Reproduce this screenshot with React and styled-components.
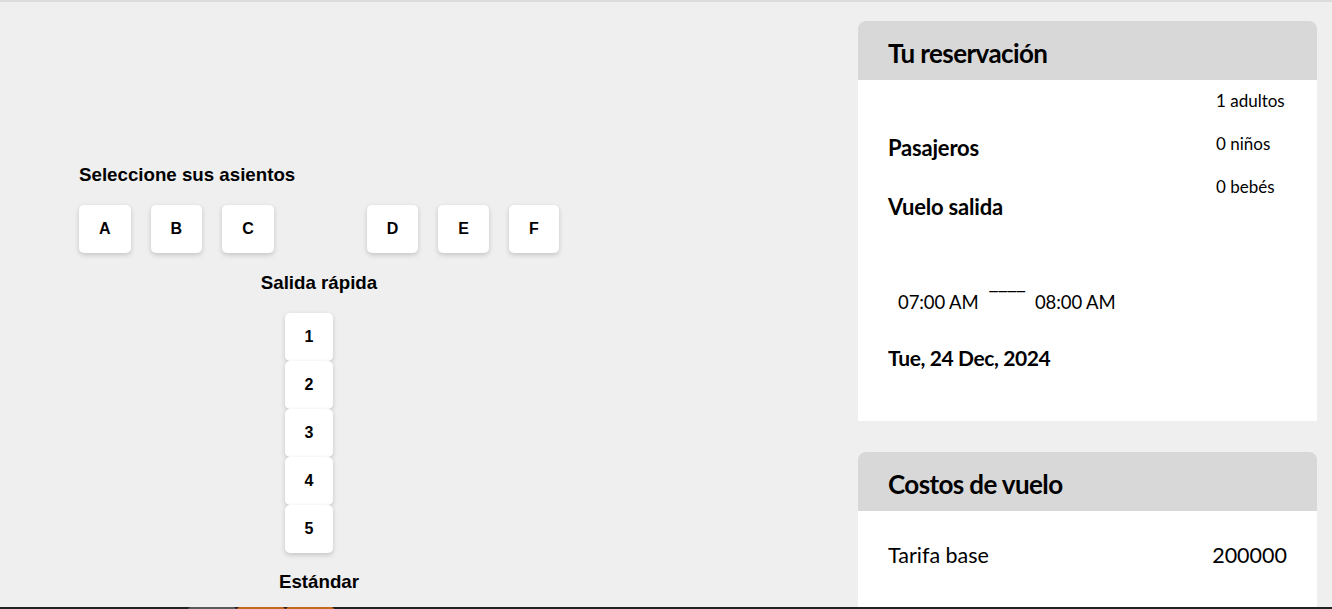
import React from "react";
import styled, { createGlobalStyle } from "styled-components";

const Global = createGlobalStyle`
  html, body { margin: 0; padding: 0; }
  body {
    background: #efefef;
    border-top: 2px solid #dcdcdc;
    font-family: "Liberation Sans", Arial, sans-serif;
    color: #000;
    overflow: hidden;
  }
`;

const Page = styled.div`
  display: flex;
  align-items: flex-start;
  justify-content: space-between;
  padding-right: 15px;
`;

const SeatMap = styled.section`
  width: 480px;
  margin: 162px 0 0 79px;
  display: flex;
  flex-direction: column;
`;

const SectionTitle = styled.h3`
  margin: 0;
  font-size: 18.72px;
  line-height: 22px;
  font-weight: 700;
  text-align: ${(p) => (p.$center ? "center" : "left")};
  margin-top: ${(p) => p.$top || 0}px;
`;

const SeatRow = styled.div`
  display: flex;
  gap: 20px;
  margin-top: 19px;
`;

const Aisle = styled.div`
  width: 53px;
`;

const Seat = styled.button`
  all: unset;
  box-sizing: border-box;
  height: 48px;
  min-width: 48px;
  padding: 0 20px;
  display: flex;
  align-items: center;
  justify-content: center;
  background: #fff;
  border-radius: 5px;
  box-shadow: 0 2px 5px rgba(0, 0, 0, 0.18);
  font-family: "Liberation Sans", Arial, sans-serif;
  font-weight: 700;
  font-size: 16px;
  color: #000;
`;

const NumberColumn = styled.div`
  display: flex;
  flex-direction: column;
  align-items: center;
  margin: 19px 20px 0 0;
`;

const NumSeat = styled(Seat)`
  width: 48px;
  padding: 0;
`;

const StandardRow = styled.div`
  position: relative;
  z-index: 2;
  display: flex;
  gap: 1px;
  margin: 14px 0 0 109px;
`;

const ColorSeat = styled.div`
  width: 48px;
  height: 48px;
  background: ${(p) => p.$color};
  border-radius: 3px 3px 0 0;
`;

const Aside = styled.aside`
  width: 459px;
  margin-top: 19px;
  display: flex;
  flex-direction: column;
  gap: 31px;
  font-family: "Lato", "Open Sans", sans-serif;
`;

const Card = styled.div`
  display: flex;
  flex-direction: column;
`;

const CardHeader = styled.div`
  height: 59px;
  box-sizing: border-box;
  padding: 4px 30px 0;
  background: #d8d8d8;
  border-radius: 8px 8px 0 0;
  display: flex;
  align-items: center;
`;

const CardTitle = styled.h2`
  margin: 0;
  font-size: 26px;
  font-weight: 700;
  letter-spacing: -0.6px;
`;

const CardBody = styled.div`
  background: #fff;
  height: ${(p) => p.$h}px;
  padding: 0 30px;
  box-sizing: border-box;
`;

const PassengerRow = styled.div`
  display: flex;
  justify-content: space-between;
  align-items: center;
  padding-top: 9px;
`;

const Label = styled.h4`
  margin: 0;
  font-size: 22px;
  font-weight: 700;
  letter-spacing: -0.2px;
  line-height: 26px;
  margin-top: ${(p) => p.$top || 0}px;
`;

const Counts = styled.div`
  display: flex;
  flex-direction: column;
  gap: 19px;
  width: 71px;
`;

const Count = styled.span`
  font-size: 17px;
  line-height: 24px;
  white-space: nowrap;
`;

const TimeRow = styled.div`
  display: flex;
  align-items: flex-start;
  gap: 10px;
  margin: 58px 0 0 10px;
`;

const Time = styled.span`
  font-size: 18.5px;
  line-height: 24px;
  margin-top: 12px;
  letter-spacing: -0.1px;
`;

const Dash = styled.span`
  font-size: 22px;
  line-height: 14px;
  letter-spacing: -1px;
  margin-top: -4px;
`;

const DateText = styled.div`
  font-size: 21px;
  font-weight: 700;
  line-height: 26px;
  letter-spacing: -0.4px;
  margin-top: 31px;
`;

const CostRow = styled.div`
  display: flex;
  justify-content: space-between;
  align-items: center;
  padding-top: 31px;
  font-size: 21.5px;
  line-height: 26px;
`;

const BottomBar = styled.div`
  position: fixed;
  left: 0;
  right: 0;
  bottom: 0;
  height: 2px;
  background: #222226;
  z-index: 1;
`;

export default function App() {
  return (
    <>
      <Global />
      <Page>
        <SeatMap>
          <SectionTitle>Seleccione sus asientos</SectionTitle>
          <SeatRow>
            <Seat>A</Seat>
            <Seat>B</Seat>
            <Seat>C</Seat>
            <Aisle />
            <Seat>D</Seat>
            <Seat>E</Seat>
            <Seat>F</Seat>
          </SeatRow>
          <SectionTitle $center $top={19}>Salida rápida</SectionTitle>
          <NumberColumn>
            {[1, 2, 3, 4, 5].map((n) => (
              <NumSeat key={n}>{n}</NumSeat>
            ))}
          </NumberColumn>
          <SectionTitle $center $top={18}>Estándar</SectionTitle>
          <StandardRow>
            <ColorSeat $color="#5b5b5b" />
            <ColorSeat $color="#c4691f" />
            <ColorSeat $color="#c4691f" />
          </StandardRow>
        </SeatMap>
        <Aside>
          <Card>
            <CardHeader>
              <CardTitle>Tu reservación</CardTitle>
            </CardHeader>
            <CardBody $h={341}>
              <PassengerRow>
                <Label $top={8}>Pasajeros</Label>
                <Counts>
                  <Count>1 adultos</Count>
                  <Count>0 niños</Count>
                  <Count>0 bebés</Count>
                </Counts>
              </PassengerRow>
              <Label $top={-5}>Vuelo salida</Label>
              <TimeRow>
                <Time>07:00 AM</Time>
                <Dash>____</Dash>
                <Time>08:00 AM</Time>
              </TimeRow>
              <DateText>Tue, 24 Dec, 2024</DateText>
            </CardBody>
          </Card>
          <Card>
            <CardHeader>
              <CardTitle>Costos de vuelo</CardTitle>
            </CardHeader>
            <CardBody $h={200}>
              <CostRow>
                <span>Tarifa base</span>
                <span>200000</span>
              </CostRow>
            </CardBody>
          </Card>
        </Aside>
      </Page>
      <BottomBar />
    </>
  );
}
